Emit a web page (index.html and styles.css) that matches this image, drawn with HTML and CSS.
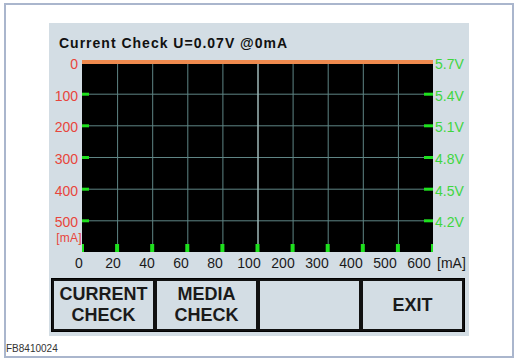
FILE: index.html
```html
<!DOCTYPE html>
<html lang="en">
<head>
    <meta charset="UTF-8">
    <title>Current Check</title>
    <link rel="stylesheet" href="styles.css">
</head>
<body>
    <div class="frame">
        <div class="panel">
            <h1 class="title">Current Check U=0.07V @0mA</h1>

            <div class="axis-left">
                <span>0</span>
                <span>100</span>
                <span>200</span>
                <span>300</span>
                <span>400</span>
                <span>500<em>[mA]</em></span>
            </div>

            <svg class="chart" width="351" height="192" viewBox="0 0 351 192">
                <rect x="0" y="0" width="351" height="192" fill="#000"/>
                <g stroke="#5f8585" stroke-width="1">
                    <line x1="35.6" y1="0" x2="35.6" y2="192"/>
                    <line x1="70.7" y1="0" x2="70.7" y2="192"/>
                    <line x1="105.8" y1="0" x2="105.8" y2="192"/>
                    <line x1="140.9" y1="0" x2="140.9" y2="192"/>
                    <line x1="211.1" y1="0" x2="211.1" y2="192"/>
                    <line x1="246.2" y1="0" x2="246.2" y2="192"/>
                    <line x1="281.3" y1="0" x2="281.3" y2="192"/>
                    <line x1="316.4" y1="0" x2="316.4" y2="192"/>
                    <line x1="0" y1="34.2" x2="351" y2="34.2"/>
                    <line x1="0" y1="65.8" x2="351" y2="65.8"/>
                    <line x1="0" y1="97.5" x2="351" y2="97.5"/>
                    <line x1="0" y1="129.2" x2="351" y2="129.2"/>
                    <line x1="0" y1="160.8" x2="351" y2="160.8"/>
                </g>
                <line x1="176" y1="0" x2="176" y2="192" stroke="#9fb8b8" stroke-width="1.5"/>
                <rect x="0" y="0" width="351" height="4" fill="#ef8a4e"/>
                <g fill="#1ee01e">
                    <rect x="0" y="32.7" width="7" height="3"/>
                    <rect x="0" y="64.3" width="7" height="3"/>
                    <rect x="0" y="96" width="7" height="3"/>
                    <rect x="0" y="127.7" width="7" height="3"/>
                    <rect x="0" y="159.3" width="7" height="3"/>
                    <rect x="342" y="32.7" width="9" height="3"/>
                    <rect x="342" y="64.3" width="9" height="3"/>
                    <rect x="342" y="96" width="9" height="3"/>
                    <rect x="342" y="127.7" width="9" height="3"/>
                    <rect x="342" y="159.3" width="9" height="3"/>
                    <rect x="-2" y="184" width="4" height="8"/>
                    <rect x="33.1" y="184" width="4" height="8"/>
                    <rect x="68.2" y="184" width="4" height="8"/>
                    <rect x="103.3" y="184" width="4" height="8"/>
                    <rect x="138.4" y="184" width="4" height="8"/>
                    <rect x="173.5" y="184" width="4" height="8"/>
                    <rect x="208.6" y="184" width="4" height="8"/>
                    <rect x="243.7" y="184" width="4" height="8"/>
                    <rect x="278.8" y="184" width="4" height="8"/>
                    <rect x="313.9" y="184" width="4" height="8"/>
                    <rect x="349" y="184" width="4" height="8"/>
                </g>
            </svg>

            <div class="axis-right">
                <span>5.7V</span>
                <span>5.4V</span>
                <span>5.1V</span>
                <span>4.8V</span>
                <span>4.5V</span>
                <span>4.2V</span>
            </div>

            <div class="axis-bottom">
                <span>0</span>
                <span>20</span>
                <span>40</span>
                <span>60</span>
                <span>80</span>
                <span>100</span>
                <span>200</span>
                <span>300</span>
                <span>400</span>
                <span>500</span>
                <span>600</span>
                <span class="unit">[mA]</span>
            </div>

            <div class="buttons">
                <button class="btn">CURRENT<br>CHECK</button>
                <button class="btn">MEDIA<br>CHECK</button>
                <button class="btn"></button>
                <button class="btn">EXIT</button>
            </div>
        </div>
        <div class="caption">FB8410024</div>
    </div>
</body>
</html>
```

FILE: styles.css
```css
* {
    margin: 0;
    padding: 0;
    box-sizing: border-box;
}

body {
    font-family: "Liberation Sans", Arial, sans-serif;
    background: #fff;
    color: #1a1a1a;
}

.frame {
    margin: 3px 0 0 4px;
    width: 510px;
    height: 355px;
    border: 2px solid #aab6cd;
    padding-top: 18px;
}

.panel {
    margin-left: 43px;
    width: 420px;
    height: 313px;
    background: #d3dde4;
    display: grid;
    grid-template-columns: 33px 351px 36px;
    grid-template-rows: 37px 192px 20px auto;
}

.title {
    grid-column: 1 / -1;
    padding: 12px 0 0 10px;
    font-size: 14px;
    line-height: 16px;
    font-weight: bold;
    letter-spacing: 1px;
    color: #111;
}

.chart {
    display: block;
}

.axis-left,
.axis-right {
    display: grid;
    grid-template-rows: repeat(6, 1fr);
    padding-top: 2px;
    height: 192px;
    font-size: 14px;
    line-height: 16px;
}

.axis-left span,
.axis-right span {
    margin-top: -6px;
}

.axis-left {
    color: #e8453c;
    text-align: right;
}

.axis-left span {
    padding-right: 4px;
}

.axis-left em {
    display: block;
    font-style: normal;
    font-size: 12px;
    line-height: 13px;
    margin: 2px -4px 0 0;
    letter-spacing: 0.3px;
}

.axis-right {
    color: #3fd63f;
    padding-left: 2px;
}

.axis-bottom {
    grid-column: 1 / -1;
    display: flex;
    padding: 1px 0 0 13px;
    font-size: 14px;
    line-height: 20px;
    color: #1a1a1a;
}

.axis-bottom span {
    width: 34px;
    text-align: center;
}

.axis-bottom .unit {
    width: auto;
    margin-left: 1px;
}

.buttons {
    grid-column: 1 / -1;
    margin: 6px 4px 0 2px;
    height: 54px;
    border: 1px solid #000;
    display: grid;
    grid-template-columns: repeat(4, 1fr);
}

.btn {
    border: 2px solid #111;
    background: #d3dde4;
    font-family: "Liberation Sans", Arial, sans-serif;
    font-size: 18px;
    line-height: 21px;
    font-weight: bold;
    color: #1a1a1a;
}

.caption {
    margin-top: 7px;
    font-size: 10px;
    line-height: 12px;
    color: #333;
}
```
